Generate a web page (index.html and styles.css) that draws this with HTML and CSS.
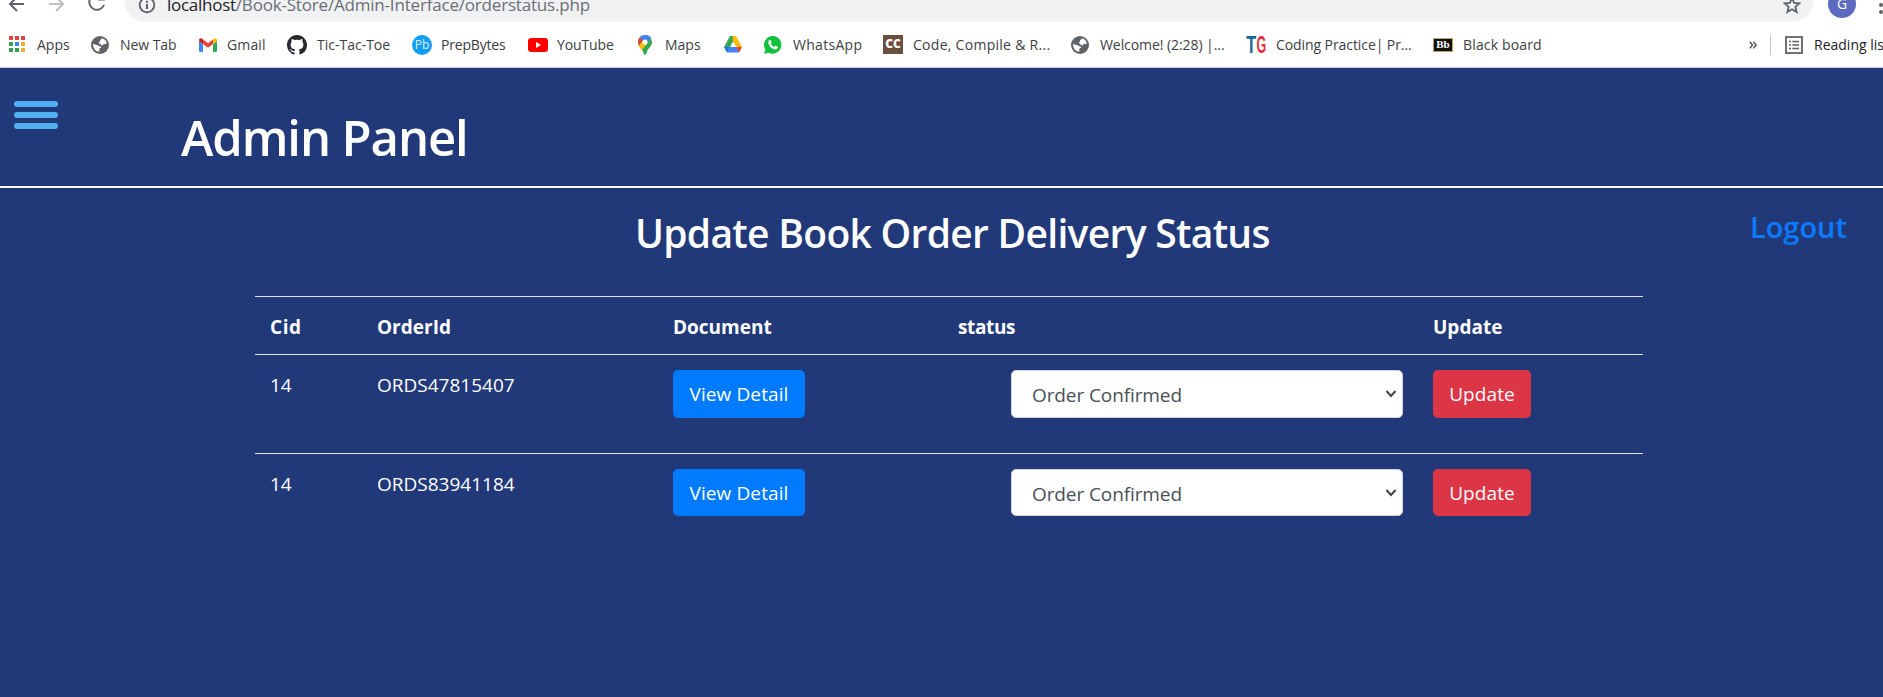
FILE: index.html
```html
<!DOCTYPE html>
<html lang="en">
<head>
<meta charset="utf-8">
<title>Admin Panel</title>
<link rel="stylesheet" href="styles.css">
</head>
<body>
<svg class="defs" width="0" height="0">
  <symbol id="globe" viewBox="0 0 18 18"><circle cx="9" cy="9" r="9" fill="#5f6368"/><path d="M2 8c2 .3 3 1 3.800 1 1.700 0 2 1.500 3.700 1.500.8 0 .8 1.300-.3 1.500-.9.200-1 1.600-.9 3.800C5 15.600 2 12.500 2 8zM9 4.200c1-.4 1.300-1.400 2-1.900 2.600.8 4.300 2.500 4.900 5-.7 1.200-1.800.3-3 .8-1 .5-.6 1.500-1.900 1.300-1.500-.3-1-1.600-2.500-1.900-1.300-.2-.9-1.600.5-1.700.8-.1-.3-1.300 0-1.600z" fill="#fff"/></symbol>
  <symbol id="chevron" viewBox="0 0 12 10"><path d="M1.500 2l4.500 5 4.500-5" fill="none" stroke="#3f454b" stroke-width="2"/></symbol>
</svg>

<div class="browser">
  <div class="toolbar">
    <svg class="nav back" width="18" height="20" viewBox="0 0 18 20"><path d="M16 9H2M9 2L2 9l7 7" fill="none" stroke="#5f6368" stroke-width="2"/></svg>
    <svg class="nav forward" width="18" height="20" viewBox="0 0 18 20"><path d="M1 9h14M8 2l7 7-7 7" fill="none" stroke="#bdc1c6" stroke-width="2"/></svg>
    <svg class="nav reload" width="20" height="20" viewBox="0 0 20 20"><path d="M15.500 4A7.600 7.600 0 1 0 17 12" fill="none" stroke="#5f6368" stroke-width="2"/><path d="M18 0v7.500h-7.500z" fill="#5f6368"/></svg>
    <div class="address">
      <svg width="18" height="18" viewBox="0 0 18 18"><circle cx="9" cy="9" r="7.300" fill="none" stroke="#5f6368" stroke-width="1.900"/><path d="M9 8v5M9 4.700v2" stroke="#5f6368" stroke-width="2"/></svg>
      <span class="host">localhost</span><span class="path">/Book-Store/Admin-Interface/orderstatus.php</span>
      <svg class="star" width="18" height="18" viewBox="0 0 18 18"><path d="M9 2l2.100 4.900 5.300.4-4 3.500 1.200 5.200L9 13.200 4.400 16l1.200-5.200-4-3.500 5.300-.4z" fill="none" stroke="#5f6368" stroke-width="1.800"/></svg>
    </div>
    <div class="avatar">G</div>
    <svg class="more" width="4" height="24" viewBox="0 0 4 24"><g fill="#5f6368"><circle cx="2" cy="5" r="2"/><circle cx="2" cy="13" r="2"/><circle cx="2" cy="20" r="2"/></g></svg>
  </div>

  <div class="bookmarks">
    <div class="bm bm-apps"><svg width="17" height="17" viewBox="0 0 17 17"><path fill="#e2453c" d="M0 0h4v4H0zM6 0h4v4H6zM12 0h4v4h-4z"/><path fill="#33a058" d="M0 6h4v4H0zM0 12h4v4H0zM6 12h4v4H6z"/><path fill="#3c82e8" d="M6 6h4v4H6z"/><path fill="#efb02e" d="M12 6h4v4h-4zM12 12h4v4h-4z"/></svg><span>Apps</span></div>
    <div class="bm bm-newtab"><svg width="18" height="18"><use href="#globe"/></svg><span>New Tab</span></div>
    <div class="bm bm-gmail"><svg width="18" height="14" viewBox="0 0 18 14"><path fill="#4285f4" d="M0 3l4 3v8H1.500Q0 14 0 12.500z"/><path fill="#34a853" d="M18 3l-4 3v8h2.500q1.500 0 1.500-1.500z"/><path fill="#ea4335" d="M4 1.500L9 5.300l5-3.800V6L9 9.800 4 6z"/><path fill="#c5221f" d="M0 2Q0 .2 1.800.2 2.500.2 4 1.500V6L0 3z"/><path fill="#fbbc04" d="M18 2q0-1.800-1.800-1.800-.7 0-2.200 1.300V6l4-3z"/></svg><span>Gmail</span></div>
    <div class="bm bm-github"><svg width="20" height="20" viewBox="0 0 16 16"><path fill="#24292f" d="M8 0C3.580 0 0 3.580 0 8c0 3.540 2.290 6.530 5.470 7.590.4.070.55-.17.550-.38 0-.19-.01-.82-.01-1.490-2.010.37-2.530-.49-2.690-.94-.09-.23-.48-.94-.82-1.130-.28-.15-.68-.52-.01-.53.630-.01 1.080.580 1.230.820.720 1.210 1.870.870 2.330.660.070-.52.280-.87.510-1.070-1.780-.2-3.640-.89-3.640-3.950 0-.87.310-1.590.820-2.150-.08-.2-.36-1.020.080-2.120 0 0 .67-.21 2.200.820.640-.18 1.320-.27 2-.27s1.360.090 2 .27c1.530-1.040 2.200-.82 2.200-.82.440 1.100.160 1.920.080 2.120.510.560.820 1.270.820 2.150 0 3.070-1.870 3.750-3.650 3.950.290.250.540.730.540 1.480 0 1.070-.01 1.930-.01 2.200 0 .21.150.460.550.380A8.010 8.010 0 0 0 16 8c0-4.420-3.580-8-8-8z"/></svg><span>Tic-Tac-Toe</span></div>
    <div class="bm bm-prep"><i class="pb">Pb</i><span>PrepBytes</span></div>
    <div class="bm bm-youtube"><svg width="20" height="14" viewBox="0 0 20 14"><rect width="20" height="14" rx="3.200" fill="#f00"/><path d="M8 4l5 3-5 3z" fill="#fff"/></svg><span>YouTube</span></div>
    <div class="bm bm-maps"><svg width="14" height="20" viewBox="0 0 14 20"><path fill="#34a853" d="M0 7a7 7 0 0 1 14 0c0 4-3 5.500-4.500 8.500C8.700 17 8.300 20 7 20s-1.500-3-2.500-4.500C3 13 0 11 0 7z"/><path fill="#fbbc04" d="M1 10.500L5 5l4 4-5.200 6C2.500 13.500 1.600 12.200 1 10.500z"/><path fill="#ea4335" d="M1.700 2.500L5 5.300 1 10.500C-.3 7.500 0 4.700 1.700 2.500z"/><path fill="#4285f4" d="M1.700 2.500C4.500-.8 9.500-.6 12 2L8.500 6 5 5.300z"/><path fill="#4285f4" d="M9 0q2.500.8 4 3L9 8 6 5z"/><circle cx="7" cy="7" r="2.600" fill="#fff"/></svg><span>Maps</span></div>
    <div class="bm bm-drive"><svg width="18" height="17" viewBox="0 0 18 17"><path fill="#34a853" d="M6 0h3.200L9 5.500l-5.500 10L0 11z"/><path fill="#fbbc04" d="M9 5.500L8.500 0H12l6 11h-5.500z"/><path fill="#4285f4" d="M5.700 11H12.500l2.800 5-.8.500h-11L2.800 16z"/><path fill="#1b74e8" d="M0 11h5.700l-2.500 5.200Q2.500 16 2 15z"/><path fill="#ea4335" d="M12.300 11H18l-2 4q-.4.900-1.200 1.200z"/></svg></div>
    <div class="bm bm-whatsapp"><svg width="18" height="18" viewBox="0 0 18 18"><path fill="#12c13e" d="M9 0a8.800 8.800 0 1 1-4.300 16.700L0 18l1.300-4.500A8.900 8.900 0 0 1 9 0z"/><path fill="#fff" d="M5.200 4.300c.8-.6 1.500-.4 1.700.2l.7 1.700c.2.600-.8 1.200-.7 1.500.7 1.500 1.800 2.500 3.300 3.100.5.100 1-1.200 1.500-1l1.900 1c.7.400-.1 2.300-1.500 2.600C8.700 14 4 9.200 4.300 6.200c0-.7.4-1.500.9-1.900z"/></svg><span>WhatsApp</span></div>
    <div class="bm bm-code"><i class="cc">CC</i><span>Code, Compile &amp; R...</span></div>
    <div class="bm bm-welcome"><svg width="18" height="18"><use href="#globe"/></svg><span>Welcome! (2:28) |...</span></div>
    <div class="bm bm-coding"><i class="tg"><b>T</b><em>G</em></i><span>Coding Practice| Pr...</span></div>
    <div class="bm bm-black"><i class="bb">Bb</i><span>Black board</span></div>
    <div class="bm-end">
      <svg width="8" height="8" viewBox="0 0 8 8"><path d="M.8.600L3.500 4 .8 7.400M4.400.600L7.100 4 4.400 7.400" fill="none" stroke="#505357" stroke-width="1.500"/></svg>
      <div class="divider"></div>
      <svg width="18" height="18" viewBox="0 0 18 18"><rect x="1" y="1" width="16" height="16" fill="none" stroke="#5f6368" stroke-width="1.800"/><path d="M4 5.500h2M4 9h2M4 12.500h2M7.300 5.500H14M7.300 9H14M7.300 12.500H14" stroke="#5f6368" stroke-width="1.500"/></svg>
      <span>Reading list</span>
    </div>
  </div>
</div>

<header class="header">
  <div class="burger"><span></span><span></span><span></span></div>
  <h1>Admin Panel</h1>
</header>

<main class="main">
  <div class="title-row">
    <h2>Update Book Order Delivery Status</h2>
    <a class="logout">Logout</a>
  </div>
  <table class="orders">
    <colgroup><col class="c-cid"><col class="c-order"><col class="c-doc"><col class="c-status"><col class="c-update"></colgroup>
    <thead>
      <tr><th class="wide">Cid</th><th>OrderId</th><th>Document</th><th class="tight">status</th><th>Update</th></tr>
    </thead>
    <tbody>
      <tr>
        <td>14</td><td>ORDS47815407</td>
        <td><button class="btn primary">View Detail</button></td>
        <td><div class="select"><span>Order Confirmed</span><svg width="12" height="10"><use href="#chevron"/></svg></div></td>
        <td><button class="btn danger">Update</button></td>
      </tr>
      <tr>
        <td>14</td><td>ORDS83941184</td>
        <td><button class="btn primary">View Detail</button></td>
        <td><div class="select"><span>Order Confirmed</span><svg width="12" height="10"><use href="#chevron"/></svg></div></td>
        <td><button class="btn danger">Update</button></td>
      </tr>
    </tbody>
  </table>
</main>
</body>
</html>
```
FILE: styles.css
```css
* { box-sizing: border-box; }
body {
  margin: 0;
  height: 697px;
  overflow: hidden;
  background: #213978;
  color: #fff;
  font-family: "Open Sans", "Noto Sans", sans-serif;
}
.defs { position: absolute; }
svg { flex: none; display: block; }

/* Browser chrome */
.browser { height: 68px; background: #fff; border-bottom: 1px solid #c9d0e0; overflow: hidden; }
.toolbar { display: flex; height: 22px; align-items: flex-start; padding-left: 8px; }
.nav { margin-top: -5px; }
.forward { margin-left: 22px; }
.reload { margin: -7px 17px 0 21px; }
.address {
  display: flex;
  width: 1690px;
  height: 44px;
  margin-top: -22px;
  padding: 17px 13px 0 14px;
  border-radius: 22px;
  background: #f0f2f4;
  font-size: 17px;
  line-height: 18px;
  white-space: nowrap;
}
.address svg { margin-top: 1px; }
.host { margin-left: 11px; padding-top: 1px; color: #202124; letter-spacing: -0.27px; }
.path { padding-top: 1px; color: #6a6e73; letter-spacing: -0.19px; }
.address .star { margin: 1px 0 0 auto; }
.avatar {
  flex: none;
  width: 28px;
  height: 28px;
  margin: -10px 0 0 14px;
  border-radius: 50%;
  background: #5c6bc0;
  color: #fff;
  font-size: 14px;
  line-height: 28px;
  text-align: center;
}
.more { margin: -8px 0 0 23px; }

.bookmarks { display: flex; height: 45px; padding-left: 9px; color: #3c4043; font-size: 14px; white-space: nowrap; }
.bm { display: flex; flex: none; align-items: center; height: 45px; gap: 11px; }
.bm span { line-height: 20px; }
.bm-apps { width: 82px; }
.bm-newtab { width: 108px; gap: 11px; letter-spacing: -0.06px; }
.bm-gmail { width: 88px; gap: 10px; letter-spacing: 0.14px; }
.bm-github { width: 125px; gap: 10px; }
.bm-prep { width: 116px; gap: 9px; letter-spacing: -0.18px; }
.bm-youtube { width: 110px; gap: 9px; letter-spacing: -0.12px; }
.bm-maps { width: 86px; gap: 13px; }
.bm-drive { width: 40px; }
.bm-whatsapp { width: 119px; letter-spacing: 0.3px; }
.bm-code { width: 188px; gap: 10px; letter-spacing: 0.28px; }
.bm-welcome { width: 176px; gap: 11px; letter-spacing: -0.07px; }
.bm-coding { width: 186px; gap: 9px; letter-spacing: -0.08px; }
.bm-black { width: 150px; gap: 10px; letter-spacing: 0.15px; }
.bm i { flex: none; width: 20px; font-style: normal; text-align: center; letter-spacing: 0; }
.pb { height: 20px; border-radius: 50%; background: #139df5; color: #d9f2ff; font: 12px/19px "Open Sans", sans-serif; }
.cc { height: 19px; background: #6b4f3e; color: #fff; font: 800 12px/18px "Open Sans", sans-serif; }
.bm .tg { display: flex; justify-content: center; height: 18px; font: 700 24px/18px "Liberation Sans", sans-serif; }
.tg b { color: #14699a; transform: scaleX(0.68); margin: 0 -3px; }
.tg em { color: #e62e3c; font-style: normal; transform: scaleX(0.52); margin: 0 -4px; }
.bm .bb { height: 14px; border: 1px solid #b9a765; background: #111; color: #fff; font: 700 11px/11px "Liberation Serif", serif; }
.bm-end { display: flex; flex: none; align-items: center; height: 45px; margin-left: 166px; }
.divider { width: 1px; height: 20px; margin: 0 14px 0 13px; background: #c4c7cb; }
.bm-end span { margin-left: 11px; color: #202124; }

/* Admin header */
.header { display: flex; height: 120px; padding-left: 14px; border-bottom: 2px solid #fff; }
.burger { display: flex; flex-direction: column; gap: 5px; width: 44px; margin-top: 33px; }
.burger span { height: 6px; border-radius: 3px; background: #4faff0; }
h1 { margin: 33px 0 0 123px; font-size: 49px; font-weight: 600; line-height: 72px; letter-spacing: -1.1px; }

/* Orders */
.title-row { display: flex; height: 108px; padding: 15px 36px 0 635px; justify-content: space-between; }
h2 { margin: 0; font-size: 39px; font-weight: 600; line-height: 60px; letter-spacing: -0.7px; white-space: nowrap; }
.logout { margin-top: -1px; color: #0c7bff; font-size: 29px; font-weight: 600; line-height: 50px; }
.orders { width: 1388px; margin-left: 255px; table-layout: fixed; border-collapse: collapse; font-size: 19px; line-height: 30px; }
.c-cid { width: 107px; }
.c-order { width: 296px; }
.c-doc { width: 284px; }
.c-status { width: 476px; }
.c-update { width: 225px; }
th, td { padding: 15px 15px 0; border-top: 1px solid #dee2e6; text-align: left; vertical-align: top; }
th { height: 58px; font-weight: 700; }
td { height: 99px; }
.wide { letter-spacing: 0.6px; }
.tight { padding-left: 16px; letter-spacing: -0.38px; }
.btn {
  display: block;
  height: 48px;
  padding: 0;
  border: 0;
  border-radius: 5px;
  color: #fff;
  font: 19px/48px "Open Sans", sans-serif;
  letter-spacing: 0.1px;
}
.primary { width: 132px; background: #007bff; }
.danger { width: 98px; background: #dc3545; }
.select {
  display: flex;
  align-items: center;
  justify-content: space-between;
  width: 392px;
  height: 48px;
  margin-left: 54px;
  padding: 0 5px 0 20px;
  border: 1px solid #ced4da;
  border-radius: 5px;
  background: #fff;
  color: #495057;
  letter-spacing: -0.1px;
}
.select span { padding-top: 2px; }
tbody tr:last-child .btn, tbody tr:last-child .select { height: 47px; }
```
